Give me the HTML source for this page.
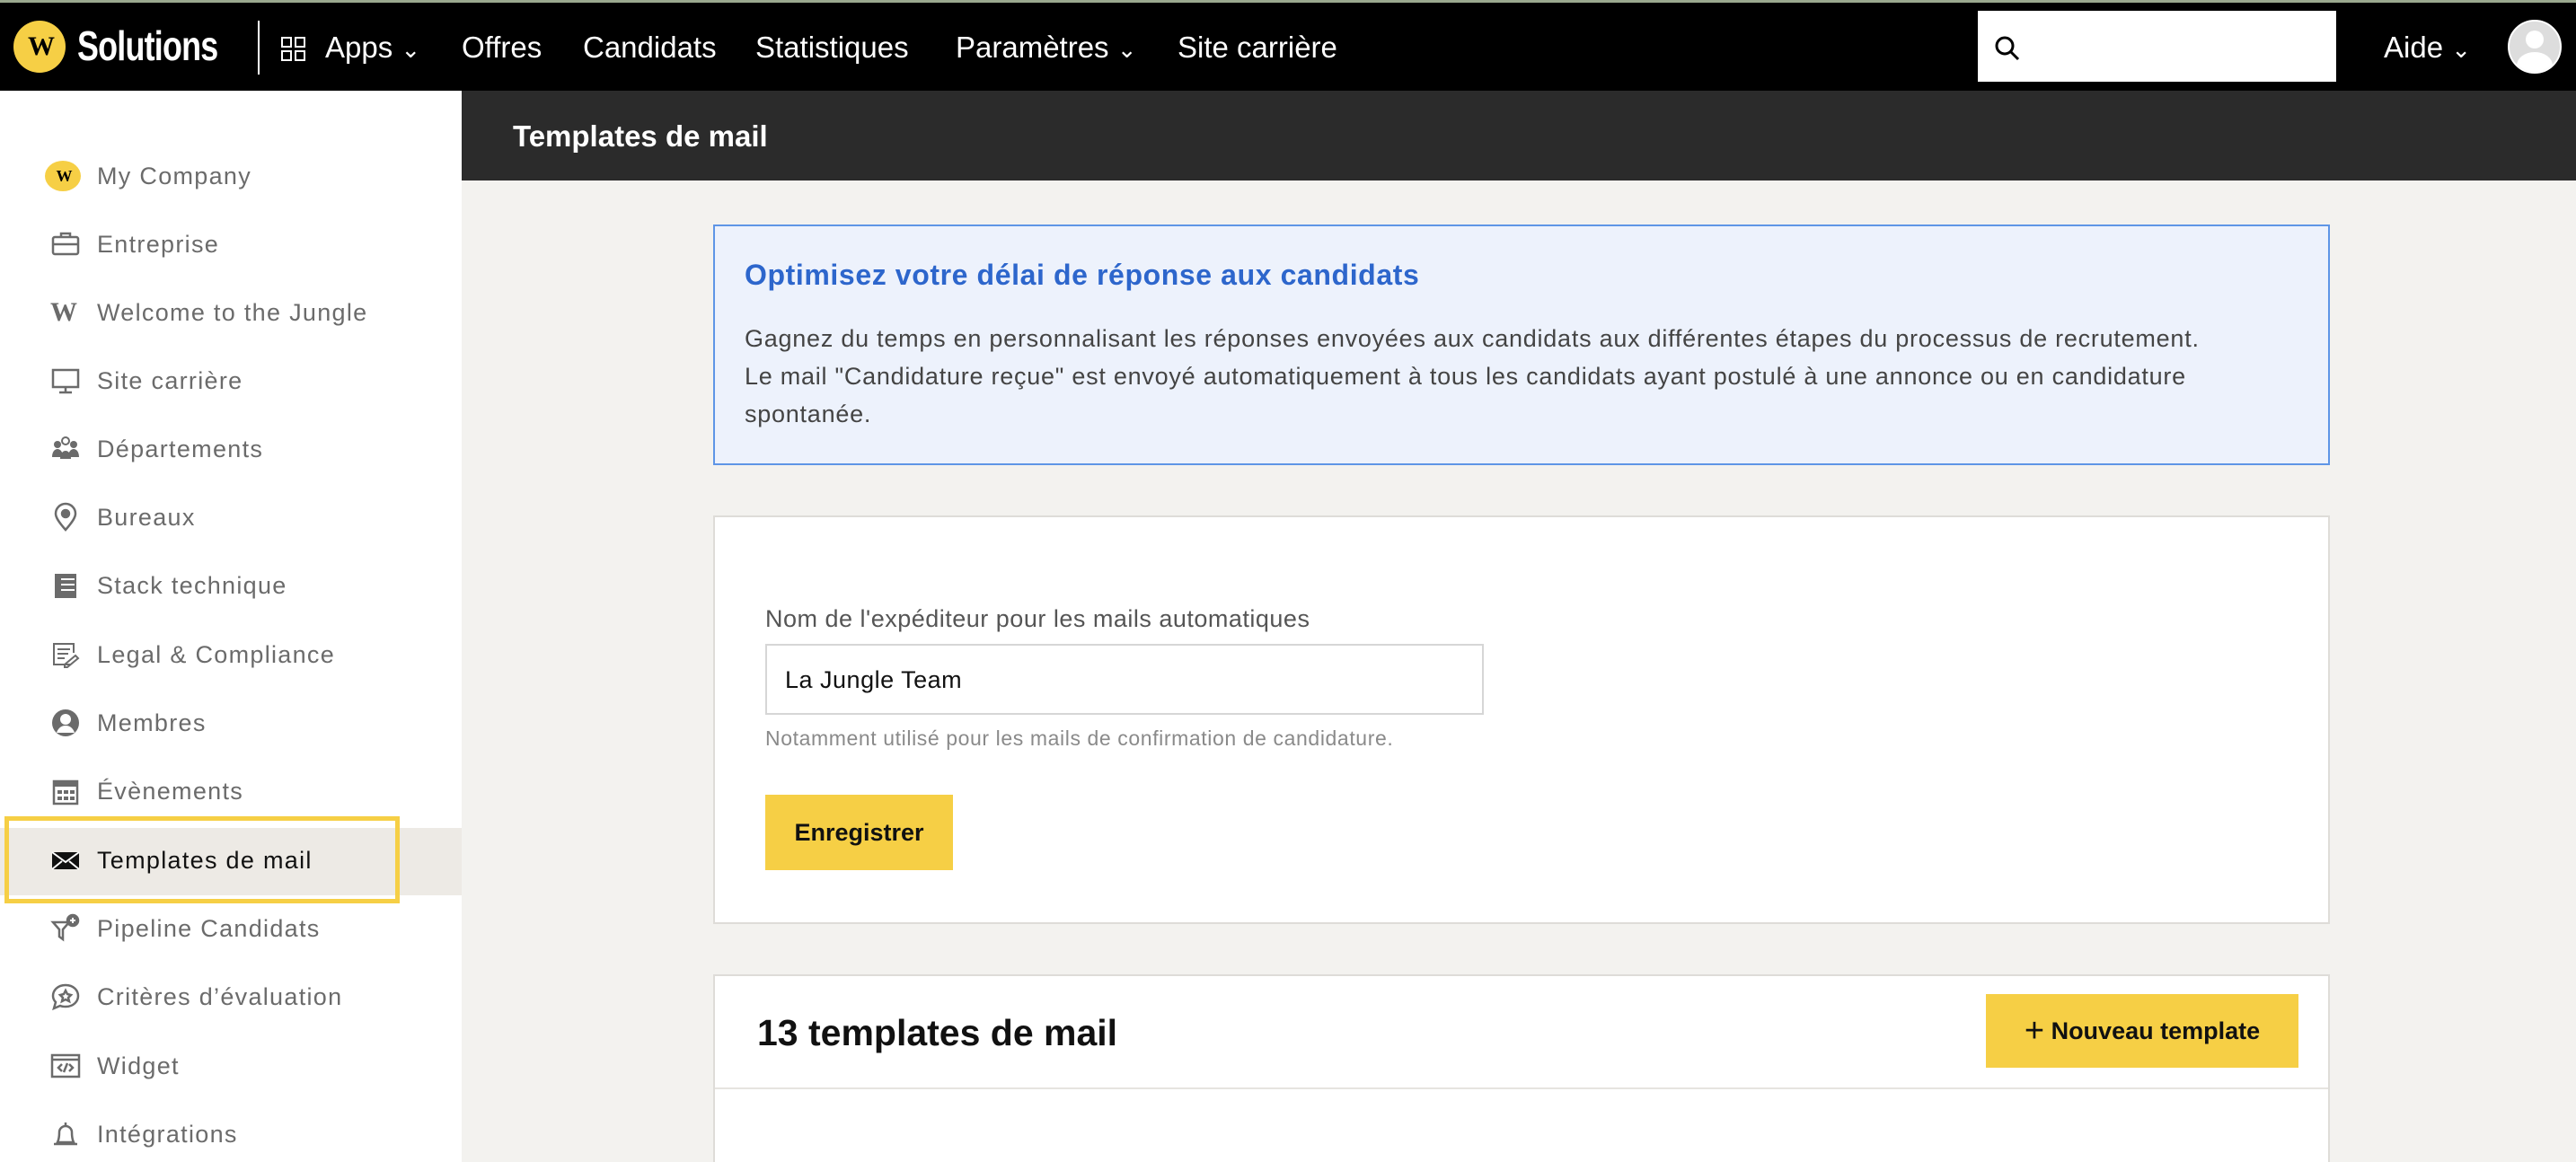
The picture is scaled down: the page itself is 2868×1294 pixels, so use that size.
<!DOCTYPE html>
<html><head><meta charset="utf-8"><style>
*{margin:0;padding:0;box-sizing:border-box}
html,body{width:2868px;height:1294px;overflow:hidden}
body{background:#f3f2ef;font-family:"Liberation Sans",sans-serif;position:relative}
.abs{position:absolute}
#top{left:0;top:0;width:2868px;height:101px;background:#000;border-top:3px solid #9aa88f}
.nav{position:absolute;top:30px;color:#fff;font-size:33px;line-height:40px;white-space:nowrap}
#side{left:0;top:101px;width:514px;height:1193px;background:#fff}
.it{position:absolute;left:108px;font-size:27px;color:#6b6b6b;line-height:34px;white-space:nowrap;letter-spacing:1.3px}
.ic{position:absolute;left:56px;width:34px;height:34px}
.card{position:absolute;left:794px;width:1800px;background:#fff;border:2px solid #dedcd8}
</style></head><body>
<div id="top" class="abs">
  <div class="abs" style="left:15px;top:20px;width:58px;height:58px;border-radius:50%;background:#f6cf45;color:#000;font:bold 30px/58px 'Liberation Serif',serif;text-align:center;letter-spacing:-4px">W</div>
  <div class="nav" style="left:86px;top:22px;font-weight:bold;font-size:46px;line-height:52px;letter-spacing:-1px;transform:scaleX(0.78);transform-origin:0 0">Solutions</div>
  <div class="abs" style="left:287px;top:20px;width:2px;height:60px;background:#fff"></div>
  <svg class="abs" style="left:312px;top:37px" width="30" height="30" viewBox="0 0 30 30" fill="none" stroke="#fff" stroke-width="2"><rect x="2" y="2" width="10" height="10"/><rect x="17" y="2" width="10" height="10"/><rect x="2" y="17" width="10" height="10"/><rect x="17" y="17" width="10" height="10"/></svg>
  <div class="nav" style="left:362px">Apps <span style="font-size:26px">&#8964;</span></div>
  <div class="nav" style="left:514px">Offres</div>
  <div class="nav" style="left:649px">Candidats</div>
  <div class="nav" style="left:841px">Statistiques</div>
  <div class="nav" style="left:1064px">Paramètres <span style="font-size:26px">&#8964;</span></div>
  <div class="nav" style="left:1311px">Site carrière</div>
  <div class="abs" style="left:2202px;top:9px;width:399px;height:79px;background:#fff"></div>
  <svg class="abs" style="left:2220px;top:36px" width="30" height="30" viewBox="0 0 30 30" fill="none" stroke="#000" stroke-width="3"><circle cx="12" cy="12" r="9"/><line x1="19" y1="19" x2="27" y2="27"/></svg>
  <div class="nav" style="left:2654px">Aide <span style="font-size:26px">&#8964;</span></div>
  <div class="abs" style="left:2792px;top:19px;width:60px;height:60px;border-radius:50%;background:#ddd;overflow:hidden;border:2px solid #fff">
    <div class="abs" style="left:18px;top:10px;width:20px;height:20px;border-radius:50%;background:#fff"></div>
    <div class="abs" style="left:8px;top:34px;width:40px;height:30px;border-radius:50%;background:#fff"></div>
  </div>
</div>
<div id="side" class="abs">
  <div class="abs" style="left:0;top:821px;width:514px;height:75px;background:#edeae5"></div>
  <div class="abs" style="left:5px;top:808px;width:440px;height:97px;border:5px solid #f6cf45"></div>
</div>
<div class="abs" style="left:514px;top:101px;width:2354px;height:100px;background:#2b2b2b"></div>
<div class="abs" style="left:571px;top:132px;color:#fff;font-weight:bold;font-size:33px;line-height:40px">Templates de mail</div>

<div class="ic" style="top:179px;border-radius:50%;background:#f6cf45;height:34px;width:40px;left:50px;font:bold 18px/34px 'Liberation Serif',serif;text-align:center;letter-spacing:-3px">W</div>
<div class="it" style="top:179px">My Company</div>
<svg class="ic" style="top:255px" viewBox="0 0 34 34" fill="none" stroke="#6b6b6b" stroke-width="2.5"><rect x="3" y="9" width="28" height="19" rx="2"/><path d="M12 9V5h10v4M3 17h28"/></svg>
<div class="it" style="top:255px">Entreprise</div>
<div class="ic" style="top:331px;font:bold 30px/34px 'Liberation Serif',serif;color:#6b6b6b;letter-spacing:-5px">W</div>
<div class="it" style="top:331px">Welcome to the Jungle</div>
<svg class="ic" style="top:407px" viewBox="0 0 34 34" fill="none" stroke="#6b6b6b" stroke-width="2.5"><rect x="3" y="5" width="28" height="19"/><path d="M17 24v5M10 30h14"/></svg>
<div class="it" style="top:407px">Site carrière</div>
<svg class="ic" style="top:483px" viewBox="0 0 34 34" fill="#6b6b6b"><circle cx="8" cy="12" r="4"/><circle cx="26" cy="12" r="4"/><circle cx="17" cy="8" r="4" fill="none" stroke="#6b6b6b" stroke-width="2"/><path d="M2 26c0-6 3-9 6-9s6 3 6 9zM20 26c0-6 3-9 6-9s6 3 6 9zM11 28c0-6 3-9 6-9s6 3 6 9z"/></svg>
<div class="it" style="top:483px">Départements</div>
<svg class="ic" style="top:559px" viewBox="0 0 34 34" fill="none" stroke="#6b6b6b" stroke-width="2.5"><path d="M17 31C9 22 6 17 6 13a11 11 0 0 1 22 0c0 4-3 9-11 18z"/><circle cx="17" cy="13" r="4" fill="#6b6b6b"/></svg>
<div class="it" style="top:559px">Bureaux</div>
<svg class="ic" style="top:635px" viewBox="0 0 34 34" fill="#6b6b6b"><rect x="5" y="4" width="24" height="27"/><path d="M12 10h15M12 16h15M12 22h15" stroke="#fff" stroke-width="2"/></svg>
<div class="it" style="top:635px">Stack technique</div>
<svg class="ic" style="top:712px" viewBox="0 0 34 34" fill="none" stroke="#6b6b6b" stroke-width="2"><path d="M22 28H4V5h22v10M8 11h14M8 16h12M8 21h8M16 28l12-10 3 3-12 10h-3z"/></svg>
<div class="it" style="top:712px">Legal &amp; Compliance</div>
<svg class="ic" style="top:788px" viewBox="0 0 34 34"><circle cx="17" cy="17" r="15" fill="#6b6b6b"/><circle cx="17" cy="13" r="6" fill="#fff"/><path d="M7 28c2-6 6-8 10-8s8 2 10 8" fill="#fff"/></svg>
<div class="it" style="top:788px">Membres</div>
<svg class="ic" style="top:864px" viewBox="0 0 34 34" fill="#6b6b6b"><rect x="4" y="6" width="26" height="25" fill="none" stroke="#6b6b6b" stroke-width="2.5"/><rect x="4" y="6" width="26" height="6"/><rect x="8" y="16" width="5" height="4"/><rect x="15" y="16" width="5" height="4"/><rect x="22" y="16" width="5" height="4"/><rect x="8" y="23" width="5" height="4"/><rect x="15" y="23" width="5" height="4"/><rect x="22" y="23" width="5" height="4"/></svg>
<div class="it" style="top:864px">Évènements</div>
<svg class="ic" style="top:941px" viewBox="0 0 34 34"><rect x="2" y="8" width="30" height="19" fill="#111"/><path d="M2 8l15 11 15-11M2 27l11-9M32 27l-11-9" stroke="#fff" stroke-width="2" fill="none"/></svg>
<div class="it" style="top:941px;color:#111">Templates de mail</div>
<svg class="ic" style="top:1017px" viewBox="0 0 34 34" fill="none" stroke="#6b6b6b" stroke-width="2.5"><path d="M3 10h18l-7 8v11l-4-3v-8z"/><circle cx="25" cy="8" r="6" fill="#6b6b6b"/><path d="M25 5v6M22 8h6" stroke="#fff" stroke-width="2"/></svg>
<div class="it" style="top:1017px">Pipeline Candidats</div>
<svg class="ic" style="top:1093px" viewBox="0 0 34 34" fill="none" stroke="#6b6b6b" stroke-width="2.5"><path d="M17 4C8 4 3 10 3 16c0 3 1 5 3 7l-2 7 7-3c2 1 4 1 6 1 9 0 14-6 14-12S26 4 17 4z"/><path d="M17 10l2 4 4 1-3 3 1 4-4-2-4 2 1-4-3-3 4-1z"/></svg>
<div class="it" style="top:1093px">Critères d’évaluation</div>
<svg class="ic" style="top:1170px" viewBox="0 0 34 34" fill="none" stroke="#6b6b6b" stroke-width="2.5"><rect x="2" y="5" width="30" height="24"/><path d="M2 10h30M13 15l-4 4 4 4M21 15l4 4-4 4M19 14l-4 10"/></svg>
<div class="it" style="top:1170px">Widget</div>
<svg class="ic" style="top:1246px" viewBox="0 0 34 34" fill="none" stroke="#6b6b6b" stroke-width="2.5"><path d="M17 4v3M8 26c2-4 2-8 2-11a7 7 0 0 1 14 0c0 3 0 7 2 11zM4 28h26"/></svg>
<div class="it" style="top:1246px">Intégrations</div>

<div class="abs" style="left:794px;top:250px;width:1800px;height:268px;background:#edf2fc;border:2px solid #5e95e6"></div>
<div class="abs" style="left:829px;top:286px;color:#2d66cc;font-weight:bold;font-size:32px;line-height:40px;letter-spacing:0.6px">Optimisez votre délai de réponse aux candidats</div>
<div class="abs" style="left:829px;top:356px;width:1760px;color:#444;font-size:27px;line-height:42px;letter-spacing:0.75px;white-space:nowrap">Gagnez du temps en personnalisant les réponses envoyées aux candidats aux différentes étapes du processus de recrutement.<br>Le mail "Candidature reçue" est envoyé automatiquement à tous les candidats ayant postulé à une annonce ou en candidature<br>spontanée.</div>

<div class="card" style="top:574px;height:455px"></div>
<div class="abs" style="left:852px;top:672px;color:#555;font-size:27px;line-height:34px;letter-spacing:0.5px">Nom de l'expéditeur pour les mails automatiques</div>
<div class="abs" style="left:852px;top:717px;width:800px;height:79px;background:#fff;border:2px solid #d6d6d6"></div>
<div class="abs" style="left:874px;top:740px;color:#111;font-size:27px;line-height:34px;letter-spacing:0.5px">La Jungle Team</div>
<div class="abs" style="left:852px;top:808px;color:#8a8a8a;font-size:23px;line-height:28px;letter-spacing:0.6px">Notamment utilisé pour les mails de confirmation de candidature.</div>
<div class="abs" style="left:852px;top:885px;width:209px;height:84px;background:#f6cf45;color:#111;font-weight:bold;font-size:27px;line-height:84px;text-align:center">Enregistrer</div>

<div class="card" style="top:1085px;height:220px"></div>
<div class="abs" style="left:796px;top:1211px;width:1796px;height:2px;background:#e6e4e0"></div>
<div class="abs" style="left:843px;top:1126px;color:#111;font-weight:bold;font-size:41px;line-height:48px">13 templates de mail</div>
<div class="abs" style="left:2211px;top:1107px;width:348px;height:82px;background:#f6cf45;color:#111;font-weight:bold;font-size:27px;line-height:82px;text-align:center"><span style="font-size:38px;font-weight:normal;vertical-align:-3px">+</span> Nouveau template</div>
</body></html>
